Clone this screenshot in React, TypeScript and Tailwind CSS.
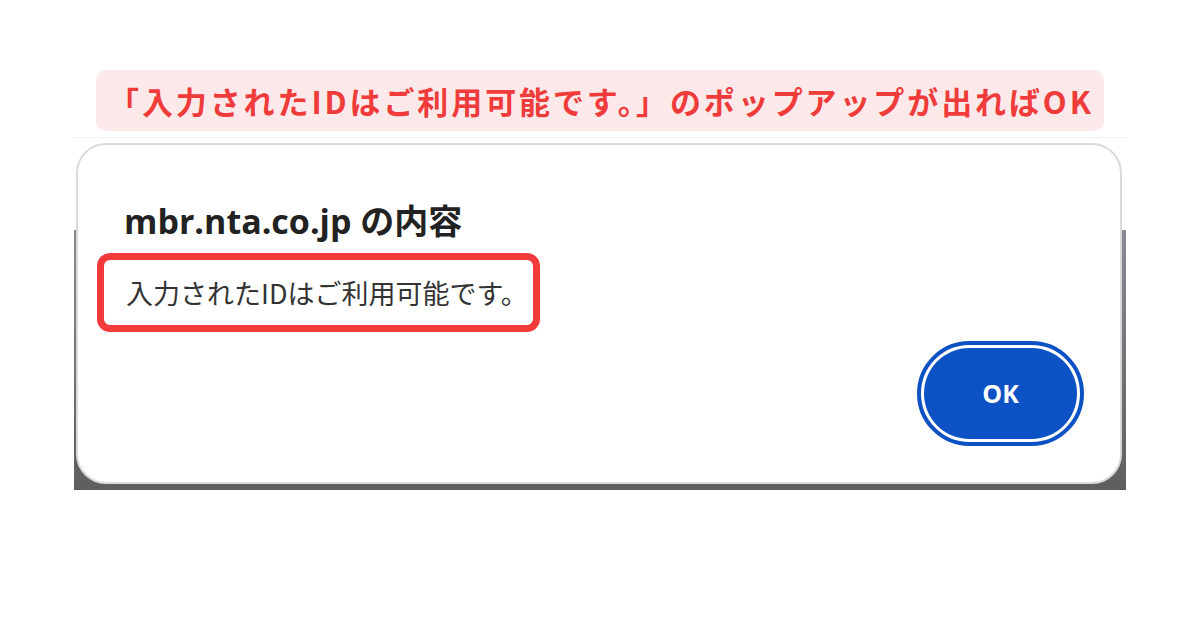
import React from 'react';

const Banner: React.FC<{ children: React.ReactNode }> = ({ children }) => (
    <div className="ml-[96px] w-[1008px] h-[61px] rounded-[10px] bg-[#fde9e9] flex items-center pl-[12px]">
        <p className="text-[31px] leading-none font-bold text-[#f03b3b] tracking-[2.9px] font-['Noto_Sans_CJK_JP',sans-serif]">{children}</p>
    </div>
);

const OkButton: React.FC = () => (
    <div className="rounded-full border-[4px] border-[#0c52c4] bg-white p-[3px]">
        <div className="w-[153px] h-[91px] rounded-full bg-[#0c52c4] flex items-center justify-center">
            <span className="text-white text-[25px] font-bold font-['Open_Sans',sans-serif]">OK</span>
        </div>
    </div>
);

const App: React.FC = () => {
    return (
        <div className="w-[1200px] h-[630px] bg-white pt-[70px]">
            <Banner>「入力されたIDはご利用可能です。」のポップアップが出ればOK</Banner>

            {/* screenshot of the browser alert */}
            <div className="mt-[6px] ml-[74px] w-[1052px] border-t border-[#f1f1f1] pt-[5px] pl-[2px] pr-[4px] pb-[6px] bg-[linear-gradient(to_bottom,#ffffff_0%,#ffffff_26%,#8a8a94_26%,#5e5e5e_100%)]">
                <div className="bg-white border-2 border-[#dadada] rounded-[30px] pt-[57px] pb-[36px] pl-[19px] pr-[36px]">
                    <h1 className="pl-[27px] text-[34px] leading-[38px] font-bold text-[#222] font-['Open_Sans','Noto_Sans_CJK_JP',sans-serif]">
                        mbr.nta.co.jp の内容
                    </h1>
                    <div className="mt-[13px] inline-flex border-[7px] border-[#f23a3a] rounded-[13px] pl-[22px] pr-[5px] py-[12px]">
                        <p className="text-[27px] leading-[41px] text-[#333] font-['Noto_Sans_CJK_JP',sans-serif]">入力されたIDはご利用可能です。</p>
                    </div>
                    <div className="mt-[9px] flex justify-end">
                        <OkButton />
                    </div>
                </div>
            </div>
        </div>
    );
};

export default App;
